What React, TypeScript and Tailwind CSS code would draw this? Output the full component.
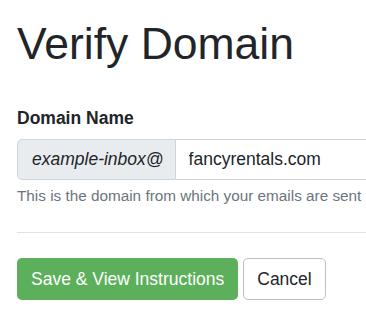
export default function App() {
  return (
    <div className="w-[366px] h-[314px] overflow-hidden bg-white font-['Liberation_Sans',Arial,sans-serif] text-[#212529]">
      <div className="w-[420px] pl-[17px] pt-[20px]">
        <h1 className="text-[44.5px] leading-[1.1] font-normal">Verify Domain</h1>

        <form className="mt-[38px]">
          <label className="block text-[17.5px] leading-[22px] font-bold">Domain Name</label>
          <div className="mt-[10px] flex h-[41px] items-stretch">
            <span className="flex shrink-0 items-center whitespace-nowrap rounded-l-[5px] border border-[#ced4da] bg-[#e9ecef] pl-[14px] pr-[11px] text-[17.5px] italic">
              example-inbox@
            </span>
            <input
              className="min-w-0 flex-1 border border-l-0 border-[#ced4da] px-[13px] text-[17.5px] outline-none"
              defaultValue="fancyrentals.com"
            />
          </div>
          <p className="mt-[5px] text-[15.3px] leading-[22px] text-[#6c757d]">
            This is the domain from which your emails are sent
          </p>

          <hr className="mt-[25px] border-t border-[#e3e3e3]" />

          <div className="mt-[25px] flex gap-[5px]">
            <button
              type="button"
              className="h-[42px] rounded-[5px] bg-[#5cb05c] px-[14px] text-[17.5px] text-white"
            >
              Save &amp; View Instructions
            </button>
            <button
              type="button"
              className="h-[42px] rounded-[5px] border border-[#b8bfc6] bg-white px-[13px] text-[17.5px] text-[#212529]"
            >
              Cancel
            </button>
          </div>
        </form>
      </div>
    </div>
  );
}
